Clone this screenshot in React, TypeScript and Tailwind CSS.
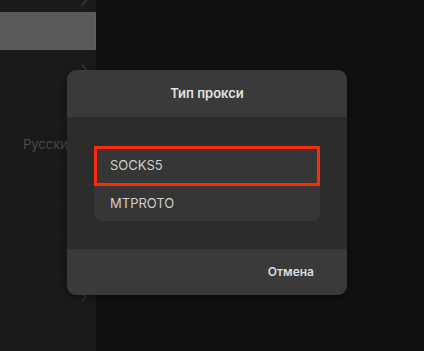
import React from "react";

function Chevron() {
  return (
    <svg width="6" height="10" viewBox="0 0 6 10" className="block">
      <path d="M1 1l4 4-4 4" fill="none" stroke="#3a3a3a" strokeWidth="1.4" strokeLinecap="round" strokeLinejoin="round" />
    </svg>
  );
}

export default function App() {
  const rows = [
    { text: "", chev: true },
    { text: "", chev: false },
    { text: "Русски", chev: false },
    { text: "", chev: false },
    { text: "", chev: false },
    { text: "", chev: false },
    { text: "", chev: true },
  ];
  return (
    <div
      className="relative flex w-[424px] h-[351px] overflow-hidden bg-[#111111]"
      style={{ fontFamily: "Inter, 'Noto Sans', sans-serif" }}
    >
      <div className="flex flex-col w-[96px] h-full bg-[#1a1a1a]">
        <div className="h-[16px] flex items-start justify-end pr-[9px] -mt-[4px]">
          <Chevron />
        </div>
        <div className="h-[38px] bg-[#5a5a5a] border-r border-[#606060]" />
        {rows.map((r, i) => (
          <div
            key={i}
            className="h-[38px] flex items-center justify-between pl-[23px] pr-[9px] border-b border-[#1e1e1e]"
          >
            <span className="text-[13px] text-[#484848] whitespace-nowrap">{r.text}</span>
            {r.chev ? <Chevron /> : null}
          </div>
        ))}
      </div>
      <div className="flex-1" />

      <div className="absolute left-[67px] top-[70px] w-[280px] h-[225px] rounded-[9px] overflow-hidden flex flex-col shadow-[0_2px_10px_rgba(0,0,0,0.4)]">
        <div className="h-[47px] bg-[#3a3a3a] flex items-center justify-center">
          <span className="text-[13px] font-semibold text-[#e2e2e2]">Тип прокси</span>
        </div>
        <div className="flex-1 bg-[#2c2c2c] pt-[29px] px-[27px]">
          <div className="rounded-[7px] bg-[#363636] flex flex-col">
            <div className="h-[40px] border-[3px] border-[#ff2a0c] flex items-center pl-[13px]">
              <span className="text-[13px] text-[#cfcfcf]">SOCKS5</span>
            </div>
            <div className="h-[35px] flex items-center pl-[16px]">
              <span className="text-[13px] text-[#cfcfcf]">MTPROTO</span>
            </div>
          </div>
        </div>
        <div className="h-[46px] bg-[#3a3a3a] flex items-center justify-end pr-[33px]">
          <span className="text-[12px] font-semibold text-[#dcdcdc]">Отмена</span>
        </div>
      </div>
    </div>
  );
}
